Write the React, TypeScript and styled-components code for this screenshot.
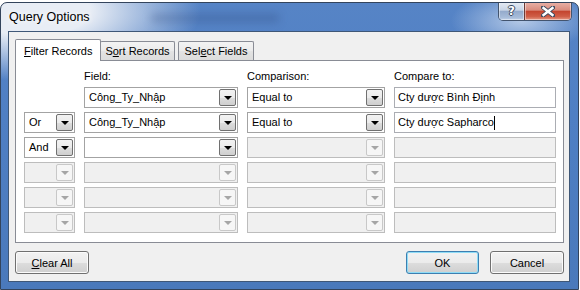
import React from "react";
import styled, { createGlobalStyle, css } from "styled-components";

const GlobalStyle = createGlobalStyle`
  html, body {
    margin: 0;
    padding: 0;
    background: #ffffff;
  }
  body {
    font-family: "Segoe UI", "Liberation Sans", Arial, sans-serif;
    font-size: 11px;
    color: #000;
  }
`;

const Window = styled.div`
  position: relative;
  box-sizing: border-box;
  margin-top: 2px;
  width: 579px;
  height: 288px;
  border: 1px solid #33445c;
  border-radius: 7px 7px 0 0;
  padding: 0 8px 7px 7px;
  display: flex;
  flex-direction: column;
  background:
    radial-gradient(ellipse 170px 70px at 30px 8px, #e8edf5 35%, rgba(232, 237, 245, 0) 100%),
    radial-gradient(ellipse 70px 30px at 520px 18px, rgba(190, 208, 234, 0.9) 0%, rgba(190, 208, 234, 0) 100%),
    linear-gradient(to bottom, #5684c6 0%, #4f7fc4 40%, #4a79bb 100%);
  overflow: hidden;
`;

const GlassSmudge = styled.div`
  position: absolute;
  left: 150px;
  top: 11px;
  width: 128px;
  height: 8px;
  background: rgba(40, 62, 110, 0.28);
  filter: blur(4px);
`;

const TitleBar = styled.div`
  height: 28px;
  display: flex;
  align-items: center;
  padding-left: 1px;
`;

const Caption = styled.span`
  position: relative;
  font-size: 12.5px;
  color: #000;
  text-shadow: 0 0 6px rgba(255, 255, 255, 0.95), 0 0 10px rgba(255, 255, 255, 0.8);
`;

const CaptionButtons = styled.div`
  position: absolute;
  top: -1px;
  right: 6px;
  display: flex;
  border: 1px solid #43546e;
  border-top: none;
  border-radius: 0 0 5px 5px;
  overflow: hidden;
  height: 18px;
`;

const CaptionButton = styled.div<{ $close?: boolean }>`
  width: ${(p) => (p.$close ? 46 : 25)}px;
  height: 100%;
  display: flex;
  align-items: center;
  justify-content: center;
  font-family: "DejaVu Sans", sans-serif;
  font-weight: bold;
  font-size: 12px;
  color: #fff;
  text-shadow: 1px 0 0 #3b4a60, -1px 0 0 #3b4a60, 0 1px 0 #3b4a60, 0 -1px 0 #3b4a60;
  box-shadow: inset 0 0 0 1px rgba(255, 255, 255, 0.45);
  ${(p) =>
    p.$close
      ? css`
          border-left: 1px solid #6b3a36;
          background: linear-gradient(to bottom, #eab3a9 0%, #d98c7e 45%, #c4452f 52%, #cf5d46 80%, #e59a86 100%);
        `
      : css`
          background: linear-gradient(to bottom, #e7ecf4 0%, #c9d5e6 45%, #95abcc 52%, #a7bcd9 85%, #c3d2e8 100%);
        `}
`;

const Client = styled.div`
  flex: 1;
  box-sizing: border-box;
  border: 1px solid #3f5777;
  background: #f0f0f0;
  padding: 7px 5px 7px 6px;
  display: flex;
  flex-direction: column;
`;

const TabStrip = styled.div`
  display: flex;
  align-items: flex-end;
  height: 21px;
  position: relative;
  z-index: 1;
`;

const Tab = styled.div<{ $active?: boolean; $width: number; $gap?: number }>`
  box-sizing: border-box;
  width: ${(p) => p.$width}px;
  margin-left: ${(p) => p.$gap ?? 0}px;
  border: 1px solid #898c95;
  border-bottom: none;
  border-radius: 2px 2px 0 0;
  display: flex;
  align-items: center;
  justify-content: center;
  ${(p) =>
    p.$active
      ? css`
          height: 22px;
          margin-bottom: -1px;
          background: #ffffff;
          justify-content: flex-start;
          padding-left: 8px;
        `
      : css`
          height: 19px;
          background: linear-gradient(to bottom, #f3f3f3 0%, #ebebeb 50%, #e3e3e3 51%, #dcdcdc 100%);
        `}
`;

const Key = styled.span`
  text-decoration: underline;
`;

const Panel = styled.div`
  box-sizing: border-box;
  border: 1px solid #898c95;
  background: #ffffff;
  padding: 8px 7px 9px 8px;
  display: grid;
  grid-template-columns: 51px 154px 138px 162px;
  grid-template-rows: 14px repeat(6, 21px);
  column-gap: 9px;
  row-gap: 4px;
`;

const ColumnLabel = styled.div`
  align-self: end;
  line-height: 14px;
  white-space: nowrap;
`;

const Combo = styled.div<{ $disabled?: boolean }>`
  box-sizing: border-box;
  height: 21px;
  padding: 1px;
  display: flex;
  border: 1px solid ${(p) => (p.$disabled ? "#bdbdbd" : "#a3a3a3")};
  background: ${(p) => (p.$disabled ? "#f0f0f0" : "#ffffff")};
`;

const ComboValue = styled.div`
  flex: 1;
  padding-left: 3px;
  line-height: 17px;
  white-space: nowrap;
  overflow: hidden;
`;

const DropButton = styled.div<{ $disabled?: boolean }>`
  box-sizing: border-box;
  width: 17px;
  display: flex;
  align-items: center;
  justify-content: center;
  border: 1px solid ${(p) => (p.$disabled ? "#c8c8c8" : "#707070")};
  border-radius: 2px;
  background: ${(p) =>
    p.$disabled
      ? "#f6f6f6"
      : "linear-gradient(to bottom, #f2f2f2 0%, #ebebeb 50%, #dddddd 51%, #cfcfcf 100%)"};
`;

const Arrow = styled.div<{ $disabled?: boolean }>`
  width: 0;
  height: 0;
  border-left: 4px solid transparent;
  border-right: 4px solid transparent;
  border-top: 4px solid ${(p) => (p.$disabled ? "#a6a6a6" : "#000")};
  margin-top: 1px;
`;

const TextBox = styled.div<{ $disabled?: boolean }>`
  box-sizing: border-box;
  height: 21px;
  border: 1px solid ${(p) => (p.$disabled ? "#bdbdbd" : "#abadb3")};
  background: ${(p) => (p.$disabled ? "#f0f0f0" : "#ffffff")};
  padding-left: 3px;
  line-height: 19px;
  white-space: nowrap;
  display: flex;
  align-items: center;
`;

const Caret = styled.span`
  display: inline-block;
  width: 1px;
  height: 14px;
  background: #000;
`;

const ButtonRow = styled.div`
  display: flex;
  margin-top: 8px;
  gap: 11px;
`;

const Spacer = styled.div`
  flex: 1;
`;

const PushButton = styled.div<{ $default?: boolean; $width: number }>`
  box-sizing: border-box;
  width: ${(p) => p.$width}px;
  height: 23px;
  border: 1px solid ${(p) => (p.$default ? "#3c7fb1" : "#707070")};
  border-radius: 3px;
  background: linear-gradient(to bottom, #f2f2f2 0%, #ebebeb 50%, #dddddd 51%, #cfcfcf 100%);
  box-shadow: inset 0 0 0 1px ${(p) => (p.$default ? "#8fdcf6" : "#fbfbfb")};
  display: flex;
  align-items: center;
  justify-content: center;
`;

type Row = {
  logic?: string;
  logicEnabled: boolean;
  field: string;
  fieldEnabled: boolean;
  comparison: string;
  comparisonEnabled: boolean;
  value: string;
  valueEnabled: boolean;
  caret?: boolean;
};

const rows: Row[] = [
  {
    logicEnabled: false,
    field: "Công_Ty_Nhập",
    fieldEnabled: true,
    comparison: "Equal to",
    comparisonEnabled: true,
    value: "Cty dược Bình Định",
    valueEnabled: true,
  },
  {
    logic: "Or",
    logicEnabled: true,
    field: "Công_Ty_Nhập",
    fieldEnabled: true,
    comparison: "Equal to",
    comparisonEnabled: true,
    value: "Cty dược Sapharco",
    valueEnabled: true,
    caret: true,
  },
  {
    logic: "And",
    logicEnabled: true,
    field: "",
    fieldEnabled: true,
    comparison: "",
    comparisonEnabled: false,
    value: "",
    valueEnabled: false,
  },
  ...[0, 1, 2].map(() => ({
    logicEnabled: false,
    field: "",
    fieldEnabled: false,
    comparison: "",
    comparisonEnabled: false,
    value: "",
    valueEnabled: false,
  })),
];

const ComboBox: React.FC<{ value?: string; disabled?: boolean }> = ({ value, disabled }) => (
  <Combo $disabled={disabled}>
    <ComboValue>{value}</ComboValue>
    <DropButton $disabled={disabled}>
      <Arrow $disabled={disabled} />
    </DropButton>
  </Combo>
);

const App: React.FC = () => {
  return (
    <>
      <GlobalStyle />
      <Window>
        <GlassSmudge />
        <TitleBar>
          <Caption>Query Options</Caption>
        </TitleBar>
        <CaptionButtons>
          <CaptionButton>?</CaptionButton>
          <CaptionButton $close>
            <svg width="14" height="11" viewBox="0 0 14 11">
              <path d="M2 1.5 L12 9.5 M12 1.5 L2 9.5" stroke="#3b4a60" strokeWidth="4.2" strokeLinecap="square" />
              <path d="M2.5 2 L11.5 9 M11.5 2 L2.5 9" stroke="#ffffff" strokeWidth="2.4" strokeLinecap="square" />
            </svg>
          </CaptionButton>
        </CaptionButtons>
        <Client>
          <TabStrip>
            <Tab $active $width={86}>
              <span>
                <Key>F</Key>ilter Records
              </span>
            </Tab>
            <Tab $width={75} $gap={-1}>
              <span>
                S<Key>o</Key>rt Records
              </span>
            </Tab>
            <Tab $width={76} $gap={3}>
              <span>
                Sel<Key>e</Key>ct Fields
              </span>
            </Tab>
          </TabStrip>
          <Panel>
            <div />
            <ColumnLabel>Field:</ColumnLabel>
            <ColumnLabel>Comparison:</ColumnLabel>
            <ColumnLabel>Compare to:</ColumnLabel>
            {rows.map((row, i) => (
              <React.Fragment key={i}>
                {i === 0 ? <div /> : <ComboBox value={row.logic} disabled={!row.logicEnabled} />}
                <ComboBox value={row.field} disabled={!row.fieldEnabled} />
                <ComboBox value={row.comparison} disabled={!row.comparisonEnabled} />
                <TextBox $disabled={!row.valueEnabled}>
                  {row.value}
                  {row.caret && <Caret />}
                </TextBox>
              </React.Fragment>
            ))}
          </Panel>
          <ButtonRow>
            <PushButton $width={74}>
              <span>
                <Key>C</Key>lear All
              </span>
            </PushButton>
            <Spacer />
            <PushButton $default $width={73}>
              OK
            </PushButton>
            <PushButton $width={74}>Cancel</PushButton>
          </ButtonRow>
        </Client>
      </Window>
    </>
  );
};

export default App;
